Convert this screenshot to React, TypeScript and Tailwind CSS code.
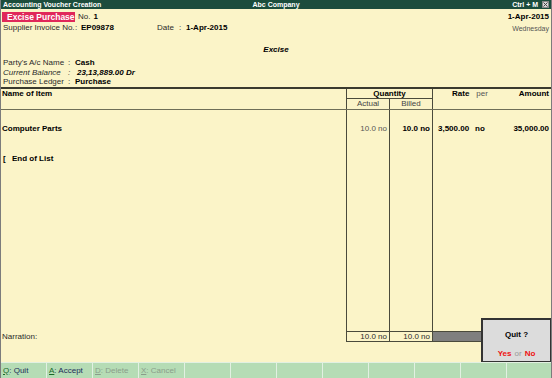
import React from 'react';

const keys = [
    { k: 'Q', label: ': Quit', on: true },
    { k: 'A', label: ': Accept', on: true },
    { k: 'D', label: ': Delete', on: false },
    { k: 'X', label: ': Cancel', on: false },
    { k: '', label: '', on: false },
    { k: '', label: '', on: false },
    { k: '', label: '', on: false },
    { k: '', label: '', on: false },
    { k: '', label: '', on: false },
    { k: '', label: '', on: false },
    { k: '', label: '', on: false },
    { k: '', label: '', on: false },
];

const cols = 'grid grid-cols-[345px_43px_43px_1fr]';
const line = 'border-l border-[#4a4a3c]';

export default function App() {
    return (
        <div className="w-[552px] h-[378px] bg-[#fbf4c8] flex flex-col relative overflow-hidden border-l border-r border-[#7c7c7c] text-[8px] leading-none text-[#2a2a2a] whitespace-nowrap font-['Liberation_Sans',Arial,sans-serif]">
            {/* Title bar */}
            <div className="h-[9px] shrink-0 bg-[#1c4d3d] text-white text-[7px] font-bold grid grid-cols-3 items-center px-[2px]">
                <span>Accounting Voucher Creation</span>
                <span className="text-center">Abc Company</span>
                <span className="flex items-center justify-end gap-[4px]">
                    Ctrl + M
                    <span className="w-[7px] h-[7px] bg-[#d6d6d6] border border-[#888] flex items-center justify-center">
                        <svg width="5" height="5" viewBox="0 0 5 5">
                            <path d="M0.5 0.5 L4.5 4.5 M4.5 0.5 L0.5 4.5" stroke="#444" strokeWidth="1" />
                        </svg>
                    </span>
                </span>
            </div>

            <div className="flex-1 flex flex-col">
                {/* Voucher header */}
                <div className="mt-[3px] h-[10px] flex items-center pr-[2px]">
                    <span className="ml-[1px] w-[73px] h-[10px] bg-[#e0285a] text-white font-bold text-[8.5px] flex items-center pl-[5px]">Excise Purchase</span>
                    <span className="ml-[3px]">No.</span>
                    <span className="ml-[3px] font-bold text-black">1</span>
                    <span className="ml-auto font-bold text-black">1-Apr-2015</span>
                </div>
                <div className="mt-[1px] h-[10px] flex items-center px-[2px]">
                    <span className="w-[72px]">Supplier Invoice No.</span>
                    <span className="w-[6px]">:</span>
                    <span className="font-bold text-black w-[76px]">EP09878</span>
                    <span className="w-[22px]">Date</span>
                    <span className="w-[7px]">:</span>
                    <span className="font-bold text-black">1-Apr-2015</span>
                    <span className="ml-auto text-[7px] text-[#555]">Wednesday</span>
                </div>
                <div className="mt-[12px] h-[10px] flex items-center justify-center font-bold italic text-black">Excise</div>

                <div className="mt-[3px] px-[2px]">
                    <div className="h-[10px] flex items-center">
                        <span className="w-[65px]">Party's A/c Name</span>
                        <span className="w-[7px]">:</span>
                        <span className="font-bold text-black">Cash</span>
                    </div>
                    <div className="h-[9px] flex items-center italic">
                        <span className="w-[65px]">Current Balance</span>
                        <span className="w-[9px]">:</span>
                        <span className="font-bold text-black">23,13,889.00 Dr</span>
                    </div>
                    <div className="h-[9px] flex items-center">
                        <span className="w-[65px]">Purchase Ledger</span>
                        <span className="w-[7px]">:</span>
                        <span className="font-bold text-black">Purchase</span>
                    </div>
                </div>

                {/* Item table */}
                <div className="mt-[1px] border-t-2 border-[#3a3a2e] flex-1 flex flex-col">
                    <div className={`${cols} h-[10px]`}>
                        <div className="font-bold text-black pl-[1px] flex items-center">Name of Item</div>
                        <div className={`col-span-2 ${line} border-b font-bold text-black flex items-center justify-center`}>Quantity</div>
                        <div className={`${line} flex items-center pr-[2px]`}>
                            <span className="ml-[19px] font-bold text-black">Rate</span>
                            <span className="ml-[7px] text-[#555]">per</span>
                            <span className="ml-auto font-bold text-black">Amount</span>
                        </div>
                    </div>
                    <div className={`${cols} h-[11px] border-b border-[#6e6e58]`}>
                        <div />
                        <div className={`${line} flex items-center justify-center text-[#444]`}>Actual</div>
                        <div className={`${line} flex items-center justify-center text-[#444]`}>Billed</div>
                        <div className={line} />
                    </div>

                    <div className={`${cols} h-[14px]`}>
                        <div />
                        <div className={line} />
                        <div className={line} />
                        <div className={line} />
                    </div>
                    <div className={`${cols} h-[10px]`}>
                        <div className="font-bold text-black pl-[1px] flex items-center">Computer Parts</div>
                        <div className={`${line} flex items-center justify-end pr-[2px] text-[#555]`}>10.0 no</div>
                        <div className={`${line} flex items-center justify-end pr-[2px] font-bold text-black`}>10.0 no</div>
                        <div className={`${line} flex items-center pr-[2px] font-bold text-black`}>
                            <span className="ml-[5px] w-[37px]">3,500.00</span>
                            <span>no</span>
                            <span className="ml-auto">35,000.00</span>
                        </div>
                    </div>
                    <div className={`${cols} h-[20px]`}>
                        <div />
                        <div className={line} />
                        <div className={line} />
                        <div className={line} />
                    </div>
                    <div className={`${cols} h-[10px]`}>
                        <div className="font-bold text-black pl-[2px] flex items-center">
                            <span className="w-[9px]">[</span>End of List
                        </div>
                        <div className={line} />
                        <div className={line} />
                        <div className={line} />
                    </div>
                    <div className={`${cols} flex-1`}>
                        <div />
                        <div className={line} />
                        <div className={line} />
                        <div className={line} />
                    </div>
                    <div className={`${cols} h-[11px]`}>
                        <div className="pl-[1px] flex items-center">Narration:</div>
                        <div className={`${line} border-t border-b flex items-center justify-end pr-[2px]`}>10.0 no</div>
                        <div className={`${line} border-t border-b flex items-center justify-end pr-[2px]`}>10.0 no</div>
                        <div className={`${line} flex`}>
                            <div className="w-[50px] bg-[#7f7f7f] border-t border-b border-[#4a4a3c]" />
                        </div>
                    </div>
                    <div className="h-[20px]" />
                </div>
            </div>

            {/* Button bar */}
            <div className="h-[16px] shrink-0 bg-[#b5dcb5] border-t border-[#e2f0e2] flex">
                {keys.map((b, i) => (
                    <div key={i} className="w-[46px] shrink-0 border-r border-[#e2f0e2] flex items-center pl-[2px]">
                        {b.k && (
                            <span className={b.on ? 'text-[#1c2c5a]' : 'text-[#8a9c8a]'}>
                                <span className={`underline ${b.on ? 'text-[#1a6a2a]' : ''}`}>{b.k}</span>
                                {b.label}
                            </span>
                        )}
                    </div>
                ))}
            </div>

            {/* Quit prompt */}
            <div className="absolute right-0 bottom-[16px] w-[70px] h-[44px] bg-[#dcdcdc] border border-l-2 border-t-2 border-[#333] flex flex-col items-center">
                <div className="mt-[11px] font-bold text-black">Quit ?</div>
                <div className="mt-auto mb-[3px] font-bold">
                    <span className="text-[#ee1111]">Yes</span>
                    <span className="text-[#999] font-normal mx-[3px]">or</span>
                    <span className="text-[#ee1111]">No</span>
                </div>
            </div>
        </div>
    );
}
